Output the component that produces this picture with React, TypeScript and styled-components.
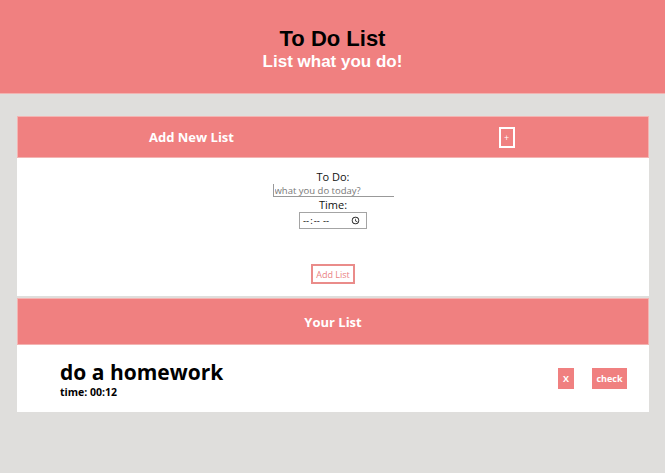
import React from "react";
import styled, { createGlobalStyle } from "styled-components";

const coral = "#f08080";

const Global = createGlobalStyle`
  html, body { margin: 0; padding: 0; background: #dfdedc; }
  body { font-family: "Open Sans", "Noto Sans", sans-serif; }
  * { box-sizing: border-box; }
`;

const Header = styled.header`
  height: 94px;
  background: ${coral};
  border-bottom: 1px solid #f2b3b1;
  display: flex;
  flex-direction: column;
  align-items: center;
  padding-top: 25px;
`;

const Title = styled.h1`
  margin: 0;
  font-family: "Liberation Sans", Arial, sans-serif;
  font-size: 22px;
  line-height: 27px;
  font-weight: 700;
  color: #000;
`;

const Subtitle = styled.h2`
  margin: 0;
  font-family: "Liberation Sans", Arial, sans-serif;
  font-size: 17px;
  line-height: 20px;
  font-weight: 700;
  color: #fff;
`;

const Main = styled.main`
  padding: 22px 16px 0 17px;
  display: flex;
  flex-direction: column;
`;

const Band = styled.div<{ $split?: boolean }>`
  height: ${(p) => (p.$split ? 42 : 47)}px;
  background: ${coral};
  border: 1px solid #f3b4b2;
  display: grid;
  grid-template-columns: ${(p) => (p.$split ? "1fr 1fr" : "1fr")};
  align-items: center;
  color: #fff;
  font-size: 13px;
  font-weight: 700;
`;

const BandCell = styled.div<{ $pad?: boolean }>`
  display: flex;
  justify-content: center;
  padding-left: ${(p) => (p.$pad ? 32 : 0)}px;
`;

const PlusButton = styled.button`
  width: 16px;
  height: 21px;
  border: 2px solid #fff;
  background: transparent;
  color: #fff;
  font-size: 9px;
  line-height: 1;
  padding: 0;
  font-family: "Open Sans", sans-serif;
`;

const FormSection = styled.section`
  background: #fff;
  height: 138px;
  display: flex;
  flex-direction: column;
  align-items: center;
  padding-top: 12px;
  margin-bottom: 2px;
  font-family: "Open Sans", sans-serif;
  font-size: 11px;
  color: #111;
`;

const Label = styled.label`
  line-height: 13px;
`;

const TextInput = styled.input`
  width: 121px;
  height: 13px;
  padding: 0 0 0 1px;
  font-size: 9.5px;
  font-family: "Open Sans", sans-serif;
  border: none;
  border-left: 1px solid #999;
  border-bottom: 1px solid #999;
  outline: none;
  margin: 1px 0 1px;
  &::placeholder { color: #777; }
`;

const TimeInput = styled.input`
  width: 68px;
  height: 17px;
  padding: 0 2px;
  font-size: 9.5px;
  letter-spacing: 1px;
  font-family: "Open Sans", sans-serif;
  border: 1px solid #a4a4a4;
  outline: none;
  margin-top: 1px;
`;

const AddButton = styled.button`
  margin-top: 35px;
  width: 44px;
  height: 20px;
  padding: 0;
  background: #fff;
  border: 2px solid #ea8c8a;
  color: #ea8383;
  font-size: 9px;
  font-family: "Open Sans", sans-serif;
`;

const Item = styled.div`
  background: #fff;
  height: 67px;
  display: flex;
  align-items: center;
  padding: 0 22px 0 43px;
`;

const ItemText = styled.div`
  flex: 1;
  display: flex;
  flex-direction: column;
  padding-top: 1px;
`;

const ItemTitle = styled.div`
  font-size: 21px;
  font-weight: 700;
  line-height: 25px;
  color: #000;
`;

const ItemTime = styled.div`
  font-size: 10.5px;
  font-weight: 700;
  line-height: 14px;
  color: #000;
`;

const SmallButton = styled.button<{ $w: number }>`
  width: ${(p) => p.$w}px;
  height: 21px;
  margin-left: 18px;
  padding: 0;
  border: none;
  background: ${coral};
  color: #fff;
  font-size: 9px;
  font-weight: 700;
  font-family: "Open Sans", sans-serif;
`;

export default function App() {
  return (
    <>
      <Global />
      <Header>
        <Title>To Do List</Title>
        <Subtitle>List what you do!</Subtitle>
      </Header>
      <Main>
        <Band $split>
          <BandCell $pad>Add New List</BandCell>
          <BandCell $pad>
            <PlusButton>+</PlusButton>
          </BandCell>
        </Band>
        <FormSection>
          <Label>To Do:</Label>
          <TextInput placeholder="what you do today?" />
          <Label>Time:</Label>
          <TimeInput type="time" />
          <AddButton>Add List</AddButton>
        </FormSection>
        <Band>
          <BandCell>Your List</BandCell>
        </Band>
        <Item>
          <ItemText>
            <ItemTitle>do a homework</ItemTitle>
            <ItemTime>time: 00:12</ItemTime>
          </ItemText>
          <SmallButton $w={16}>X</SmallButton>
          <SmallButton $w={35}>check</SmallButton>
        </Item>
      </Main>
    </>
  );
}
